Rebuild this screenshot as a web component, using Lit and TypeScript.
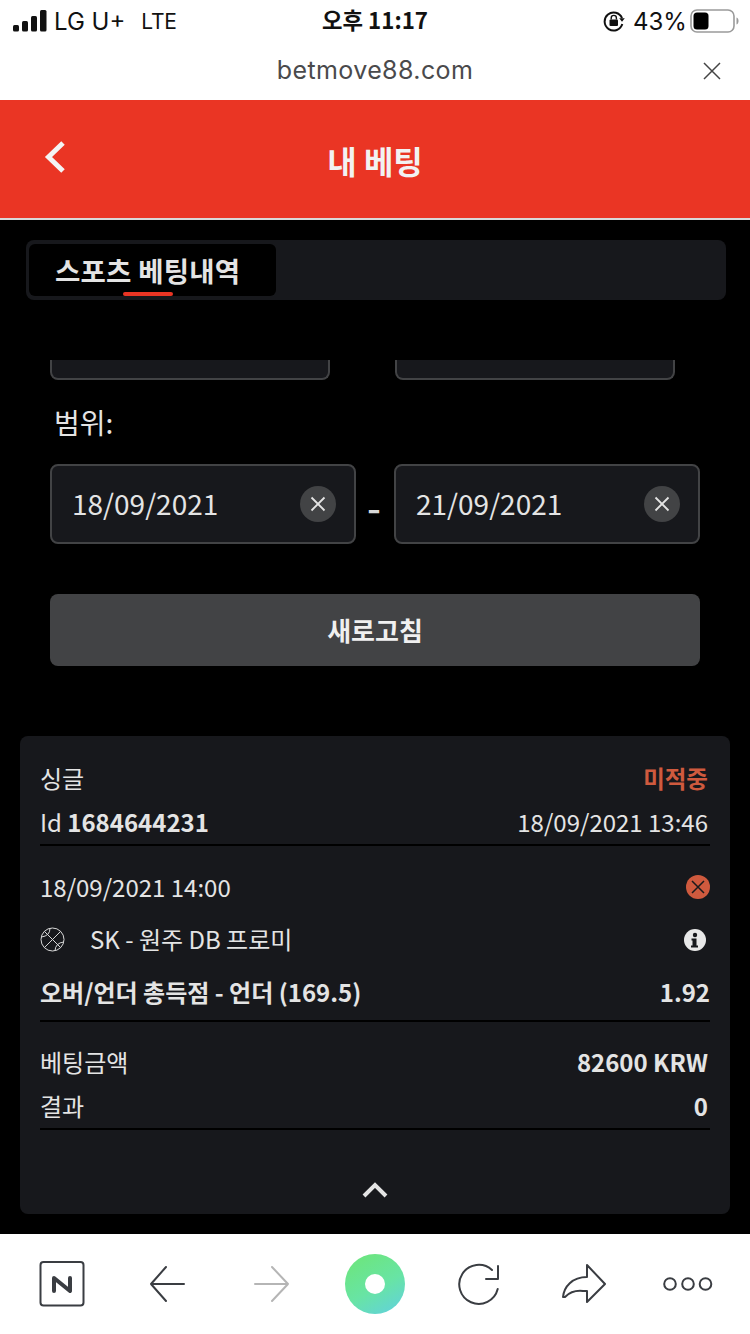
import { LitElement, html, css } from "lit";
import { customElement } from "lit/decorators.js";

const closeIcon = html`<svg class="clear-x" width="16" height="16" viewBox="0 0 16 16"><path d="M1.500 1.500 14.500 14.500M14.500 1.500 1.500 14.500" stroke="#e4e4e4" stroke-width="1.800" fill="none"/></svg>`;

@customElement("app-root")
export class AppRoot extends LitElement {
  static styles = css`
    :host { display: block; width: 750px; height: 1334px; background: #000; overflow: hidden;
      font-family: "Noto Sans CJK KR", "Noto Sans", sans-serif; color: #e4e4e4; }
    * { box-sizing: border-box; }
    .page { display: flex; flex-direction: column; height: 1334px; }
    .status { height: 44px; background: #fff; color: #111; display: flex; align-items: center; padding: 0 0 2px 13px;
      font-family: Inter, "Noto Sans CJK KR", sans-serif; position: relative; flex: none; }
    .status-left { display: flex; align-items: center; gap: 7px; }
    .carrier { font-size: 24px; font-weight: 400; }
    .lte { margin-left: 9px; font-size: 21px; letter-spacing: -0.2px; }
    .clock { position: absolute; left: 322px; top: 2px; font-size: 22.300px; font-weight: 600; line-height: 34px; font-family: "Noto Sans CJK KR", sans-serif; }
    .status-right { position: absolute; left: 603px; top: 7px; display: flex; align-items: center; height: 28px; }
    .pct { margin-left: 8px; font-size: 24px; }
    .battery { margin-left: 3px; }
    .urlbar { height: 56px; background: #fff; display: flex; align-items: center; justify-content: center; position: relative; flex: none;
      font-family: Inter, sans-serif; font-size: 25px; color: #4a4a4c; padding-bottom: 4px; letter-spacing: 0.4px; }
    .url-close { position: absolute; left: 703px; top: 18px; }
    .header { height: 120px; background: #ea3524; border-bottom: 2px solid #d8d8d8; display: flex; align-items: center; justify-content: center; position: relative; flex: none; }
    .header h1 { margin: 1px 0 0; font-size: 32px; font-weight: 700; color: #f2f2f2; line-height: 44px; }
    .back { position: absolute; left: 43px; top: 40px; }
    .content { flex: 1; min-height: 0; display: flex; flex-direction: column; padding: 20px 20px 0; }
    .tabs { margin: 0 4px 0 6px; height: 60px; background: #17181c; border-radius: 8px; padding: 4px 3px; display: flex; flex: none; }
    .tab { width: 247px; height: 52px; background: #000; border-radius: 6px; position: relative; padding: 7px 0 0 26px;
      font-size: 27.500px; font-weight: 700; line-height: 38px; color: #e4e4e4; letter-spacing: 0.25px; }
    .tab::after { content: ""; position: absolute; left: 94px; bottom: 0; width: 50px; height: 4px; background: #ea3524; border-radius: 2px; }
    .filters { margin-top: 60px; padding: 0 30px; flex: none; }
    .stubs { display: flex; gap: 65px; }
    .stub { width: 280px; height: 20px; background: #17181c; border: 2px solid #424345; border-top: 0; border-radius: 0 0 8px 8px; }
    .label { margin: 24px 0 0 4px; height: 40px; font-size: 28px; line-height: 37px; color: #e4e4e4; }
    .range { margin-top: 20px; display: flex; align-items: center; }
    .date { width: 306px; height: 80px; background: #17181c; border: 2px solid #424345; border-radius: 8px; display: flex; align-items: center; justify-content: space-between;
      padding: 0 18px 0 20px; font-size: 28px; color: #e4e4e4; }
    .date > span:first-child { margin-top: -2px; }
    .sep { width: 38px; text-align: center; font-size: 39px; font-weight: 500; line-height: 50px; color: #d8d8d8; padding: 4px 0 0 0; margin-left: -1px; margin-right: 1px; }
    .clear { width: 36px; height: 36px; border-radius: 50%; background: #424345; display: flex; align-items: center; justify-content: center; }
    .refresh { margin-top: 50px; height: 72px; border-radius: 8px; background: #424345; display: flex; align-items: center; justify-content: center;
      font-size: 26px; font-weight: 700; color: #f0f0f0; padding-bottom: 2px; }
    .card { margin-top: 70px; height: 478px; background: #17181c; border-radius: 8px; padding: 20px 20px 0; display: flex; flex-direction: column; flex: none; }
    .row { display: flex; justify-content: space-between; align-items: center; }
    .t { font-size: 24px; line-height: 44px; color: #e4e4e4; }
    .t > span:last-child { margin-right: 2px; }
    .t.r5 > span:last-child { margin-right: 0; }
    .b { font-weight: 700; }
    .lost { color: #cf5a3e; font-weight: 700; font-size: 23.500px; }
    .divider { height: 2px; background: #000; flex: none; }
    .r1 { height: 44px; }
    .r2 { height: 44px; }
    .r3 { height: 44px; margin-top: 19px; }
    .r4 { height: 50px; margin-top: 5px; }
    .r5 { height: 50px; margin-top: 3px; }
    .left-icon { display: flex; align-items: center; gap: 25px; }
    .r6 { height: 44px; margin-top: 18px; }
    .r7 { height: 44px; }
    .collapse { display: flex; justify-content: center; margin-top: 51px; }
    .lost-icon { flex: none; }
    .info { margin: 2px 4px 0 0; flex: none; }
    .gap-rule { margin-top: 3px; }
    .toolbar { height: 100px; flex: none; background: #fff; }
    .toolbar svg { display: block; }
  `;

  render() {
    return html`<div class="page">
      <div class="status">
        <div class="status-left">
          <svg width="34" height="22" viewBox="0 0 34 22">
            <rect x="0" y="15" width="6" height="6.500" rx="1.500" fill="#111"/>
            <rect x="9" y="11" width="6" height="10.500" rx="1.500" fill="#111"/>
            <rect x="18" y="6" width="6" height="15.500" rx="1.500" fill="#111"/>
            <rect x="27" y="0" width="6.500" height="21.500" rx="1.500" fill="#111"/>
          </svg>
          <span class="carrier">LG U+</span><span class="lte">LTE</span>
        </div>
        <div class="clock">오후 11:17</div>
        <div class="status-right">
          <svg width="22" height="22" viewBox="0 0 22 22">
            <path d="M19 8.200A9 9 0 1 0 19.300 14" fill="none" stroke="#111" stroke-width="2"/>
            <path d="M16.200 8.200h5.600l-2.800 3.600z" fill="#111"/>
            <rect x="6.500" y="9.500" width="8.500" height="6.500" rx="1" fill="#111"/>
            <path d="M8.200 9.500V8a2.600 2.600 0 0 1 5.200 0v1.500" fill="none" stroke="#111" stroke-width="1.400"/>
          </svg>
          <span class="pct">43%</span>
          <svg class="battery" width="49" height="24" viewBox="0 0 49 24">
            <rect x="1" y="1" width="43" height="22" rx="6" fill="none" stroke="#9a9a9a" stroke-width="1.600"/>
            <rect x="3.500" y="3.500" width="15" height="17" rx="3.500" fill="#000"/>
            <path d="M46.500 8.500c1.600.6 2 2 2 3.500s-.4 2.900-2 3.500z" fill="#9a9a9a"/>
          </svg>
        </div>
      </div>
      <div class="urlbar">betmove88.com
        <svg class="url-close" width="18" height="18" viewBox="0 0 18 18"><path d="M1 1 17 17M17 1 1 17" stroke="#444" stroke-width="1.500" fill="none"/></svg>
      </div>
      <div class="header">
        <svg class="back" width="24" height="34" viewBox="0 0 24 34"><path d="M20 3 5.500 17 20 31" stroke="#f4f4f4" stroke-width="5" fill="none"/></svg>
        <h1>내 베팅</h1>
      </div>
      <div class="content">
        <div class="tabs"><div class="tab">스포츠 베팅내역</div></div>
        <div class="filters">
          <div class="stubs"><div class="stub"></div><div class="stub"></div></div>
          <div class="label">범위:</div>
          <div class="range">
            <div class="date"><span>18/09/2021</span><span class="clear">${closeIcon}</span></div>
            <div class="sep">-</div>
            <div class="date"><span>21/09/2021</span><span class="clear">${closeIcon}</span></div>
          </div>
          <div class="refresh">새로고침</div>
        </div>
        <div class="card">
          <div class="row t r1"><span>싱글</span><span class="lost">미적중</span></div>
          <div class="row t r2"><span>Id <span class="b">1684644231</span></span><span>18/09/2021 13:46</span></div>
          <div class="divider"></div>
          <div class="row t r3"><span>18/09/2021 14:00</span>
            <svg class="lost-icon" width="24" height="24" viewBox="0 0 24 24"><circle cx="12" cy="12" r="12" fill="#cf5a3e"/><path d="M6 6 18 18M18 6 6 18" stroke="#1a1a1c" stroke-width="1.500" fill="none"/></svg>
          </div>
          <div class="row t r4"><span class="left-icon">
            <svg width="25" height="25" viewBox="0 0 25 25" fill="none" stroke="#d8d8d8" stroke-width="1"><circle cx="12.500" cy="12.500" r="11.500"/><path d="M4.400 20.600 20.600 4.400M4.400 4.400 20.600 20.600M10 1.300Q10 9 1.300 10M23.700 15Q15.500 16 15 23.700"/></svg>
            <span>SK - 원주 DB 프로미</span></span>
            <svg class="info" width="22" height="22" viewBox="0 0 22 22"><circle cx="11" cy="11" r="11" fill="#e8e8e8"/><circle cx="11" cy="6" r="2.200" fill="#17181c"/><path d="M7.500 9.500h5v7h1.500v2h-7v-2h1.500v-5h-1z" fill="#17181c"/></svg>
          </div>
          <div class="row t b r5"><span>오버/언더 총득점 - 언더 (169.5)</span><span>1.92</span></div>
          <div class="divider gap-rule"></div>
          <div class="row t r6"><span>베팅금액</span><span class="b">82600 KRW</span></div>
          <div class="row t r7"><span>결과</span><span class="b">0</span></div>
          <div class="divider"></div>
          <div class="collapse"><svg width="28" height="18" viewBox="0 0 28 18"><path d="M3 15 14 4 25 15" stroke="#e4e4e4" stroke-width="4" fill="none"/></svg></div>
        </div>
      </div>
      <div class="toolbar">
        <svg width="750" height="100" viewBox="0 0 750 100" fill="none" stroke-linecap="round" stroke-linejoin="round">
          <defs><linearGradient id="g" x1="0.300" y1="0.100" x2="0.800" y2="1"><stop offset="0" stop-color="#6ce584"/><stop offset="0.500" stop-color="#68e4a4"/><stop offset="1" stop-color="#62d3d8"/></linearGradient></defs>
          <rect x="40.500" y="28" width="43" height="43.500" rx="3" stroke="#3a3d42" stroke-width="2"/>
          <path d="M54 57V44L70 57V44" stroke="#3a3d42" stroke-width="4"/>
          <path d="M184 50H151M166 33 151 50 166 67" stroke="#3a3d42" stroke-width="2"/>
          <path d="M255 50H288M272 33 288 50 272 67" stroke="#b5b5b5" stroke-width="2"/>
          <circle cx="375" cy="50" r="30" fill="url(#g)"/>
          <circle cx="375" cy="50" r="10" fill="#fff"/>
          <path d="M498 32V45H486M497.700 55A19.500 19.500 0 1 1 492 36" stroke="#3a3d42" stroke-width="2"/>
          <path d="M587 31 605 50 587 68V57H583C574 56 569 59 565 63H563C564 53 572 43 587 43Z" stroke="#3a3d42" stroke-width="2"/>
          <circle cx="670" cy="50" r="5.800" stroke="#3a3d42" stroke-width="2"/>
          <circle cx="688" cy="50" r="5.800" stroke="#3a3d42" stroke-width="2"/>
          <circle cx="705.500" cy="50" r="5.800" stroke="#3a3d42" stroke-width="2"/>
        </svg>
      </div>
    </div>`;
  }
}
